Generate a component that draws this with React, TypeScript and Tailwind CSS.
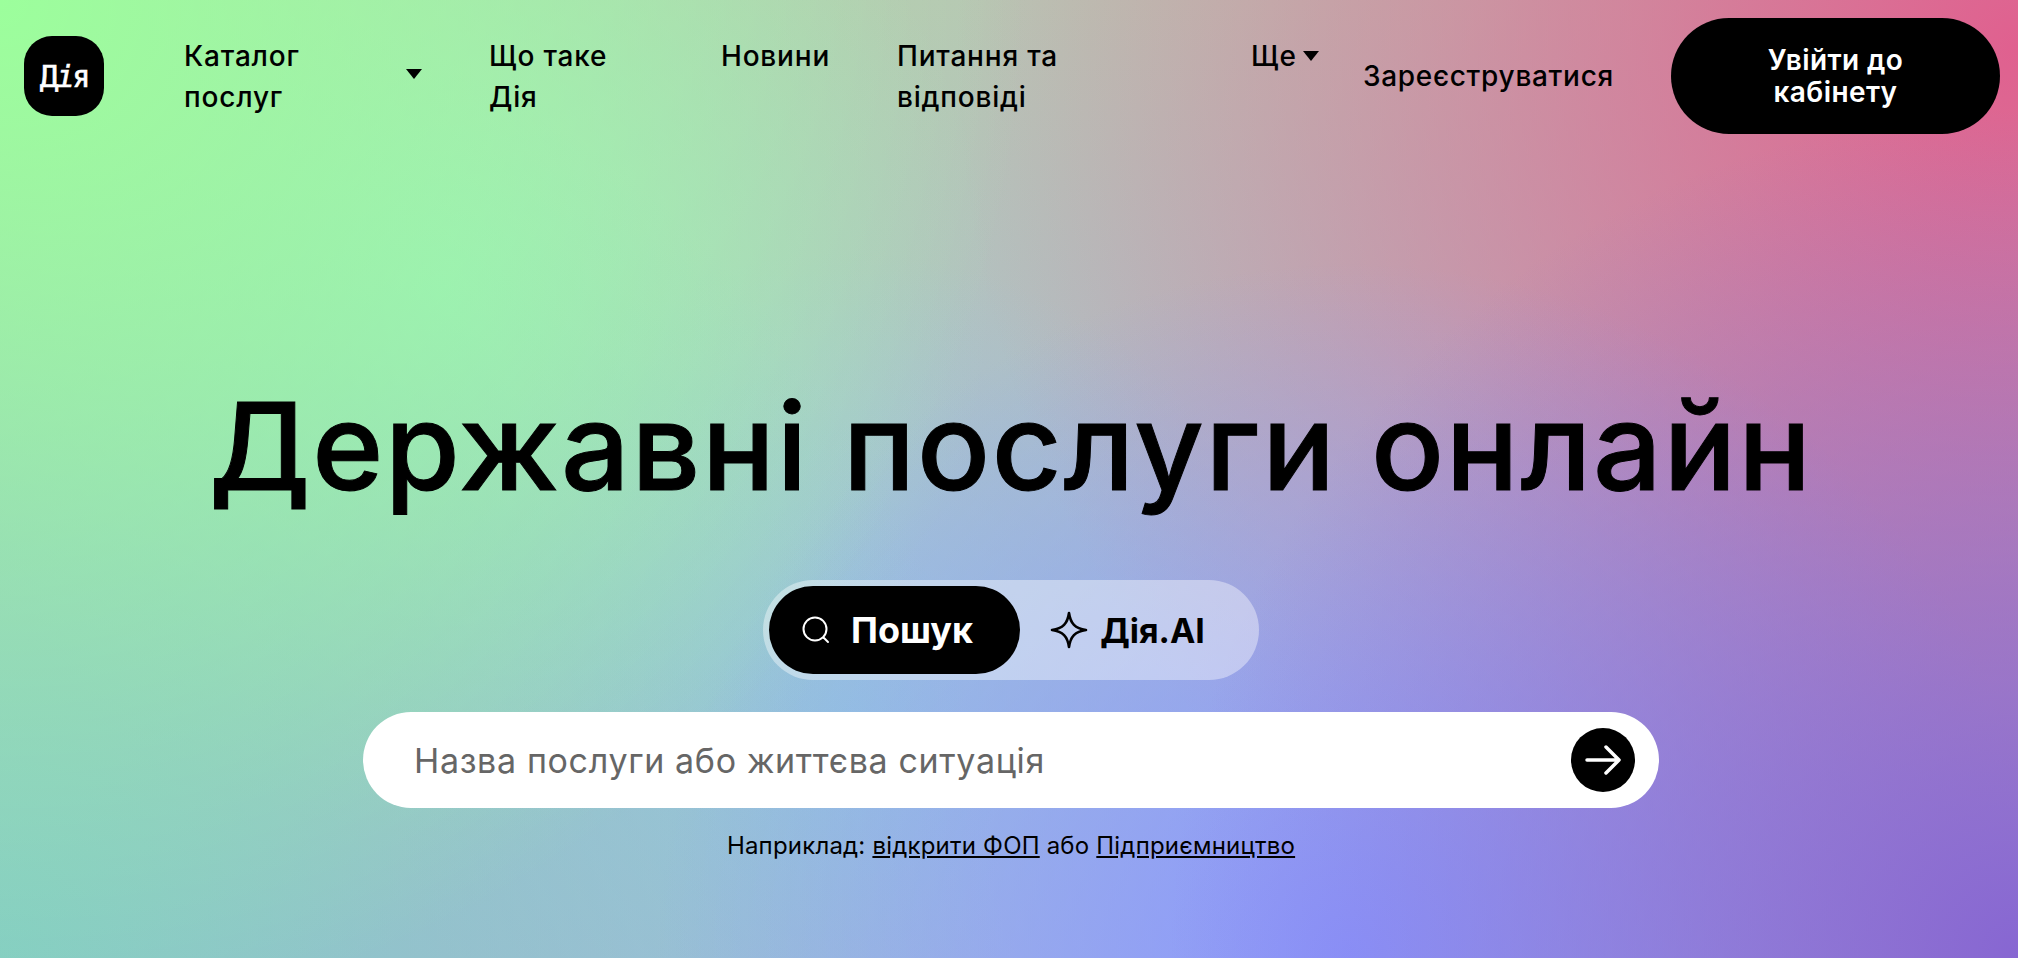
import React from "react";

function Caret({ className }: { className: string }) {
  return (
    <svg viewBox="0 0 16 10" className={className} aria-hidden="true">
      <path d="M0 0h16L8 10z" fill="currentColor" />
    </svg>
  );
}

export default function App() {
  return (
    <div className="h-screen overflow-hidden font-['Inter',sans-serif] text-black bg-[radial-gradient(circle_at_0%_0%,#9cff9c_0%,rgba(156,255,156,0)_46%),radial-gradient(circle_at_100%_100%,#8766d2_0%,rgba(135,102,210,0)_38%),radial-gradient(circle_at_67%_100%,#8a98ff_0%,rgba(138,152,255,0)_42%),radial-gradient(circle_at_100%_5%,#e0608f_0%,rgba(224,96,143,0)_48%),radial-gradient(circle_at_0%_100%,#84ccc4_0%,rgba(132,204,196,0)_45%),radial-gradient(circle_at_22%_30%,#a4ecc0_0%,rgba(164,236,192,0)_32%),radial-gradient(circle_at_42%_75%,#98c4e0_0%,rgba(152,196,224,0)_34%),linear-gradient(#b8c6b4,#a8b4d8)]">
      <header className="flex items-start pt-[18px] pl-6 pr-[18px] h-[134px]">
        <div className="mt-[18px] w-20 h-20 shrink-0 rounded-[28px] bg-black text-white flex items-center justify-center font-['DejaVu_Sans_Mono',monospace] text-[31px] tracking-[-2.5px] [-webkit-text-stroke:0.6px_white]">
          <span>Д<span className="italic">і</span>я</span>
        </div>
        <nav className="flex items-start text-[28px] leading-[41px] font-medium tracking-[0.8px]">
          <div className="ml-20 w-[305px] flex items-start pt-[18px]">
            <span className="w-[222px] pr-10">Каталог послуг</span>
            <Caret className="mt-[33px] w-4 h-[10px]" />
          </div>
          <div className="w-[232px] pt-[18px]"><span className="block w-[150px]">Що таке Дія</span></div>
          <div className="w-[176px] pt-[18px]">Новини</div>
          <div className="w-[354px] pt-[18px]"><span className="block w-[250px]">Питання та відповіді</span></div>
          <div className="w-[112px] pt-[18px] flex items-start gap-[6px]">
            <span>Ще</span>
            <Caret className="mt-[15px] w-4 h-[10px]" />
          </div>
        </nav>
        <div className="self-stretch flex items-center text-[28px] font-medium tracking-[0.7px] whitespace-nowrap">Зареєструватися</div>
        <div className="ml-auto w-[329px] h-[116px] rounded-full bg-black text-white flex items-center justify-center text-center text-[28px] leading-[32px] font-semibold tracking-[0.4px]">
          <span className="w-[190px]">Увійти до кабінету</span>
        </div>
      </header>
      <main className="flex flex-col items-center pl-1 pt-[237px]">
        <h1 className="text-[121px] leading-[150px] font-medium tracking-[1.8px] whitespace-nowrap [-webkit-text-stroke:1px_black]">Державні послуги онлайн</h1>
        <div className="mt-[59px] flex items-center w-[496px] h-[100px] p-[6px] rounded-full bg-white/40">
          <div className="w-[251px] h-[88px] rounded-full bg-black text-white flex items-center justify-center gap-[21px] pr-[14px] text-[36px] font-bold">
            <svg viewBox="0 0 28 28" className="w-7 h-7" fill="none" stroke="currentColor" strokeWidth="2" strokeLinecap="round" aria-hidden="true">
              <circle cx="13" cy="13" r="11.5" />
              <path d="M21.5 21.5 26 26" />
            </svg>
            Пошук
          </div>
          <div className="flex-1 flex items-center justify-center gap-3 pr-[18px] text-[34px] font-bold">
            <svg viewBox="0 0 38 38" className="w-[38px] h-[38px]" fill="none" stroke="currentColor" strokeWidth="2.6" strokeLinejoin="round" aria-hidden="true">
              <path d="M19 2c1.5 10.5 6 15.5 17 17-11 1.5-15.500 6.500-17 17-1.500-10.500-6-15.500-17-17 11-1.500 15.500-6.500 17-17z" />
            </svg>
            Дія.AI
          </div>
        </div>
        <div className="mt-8 w-[1296px] h-24 rounded-full bg-white flex items-center justify-between pl-[51px] pr-6">
          <span className="text-[34px] tracking-[0.65px] text-[#666666]">Назва послуги або життєва ситуація</span>
          <div className="w-16 h-16 rounded-full bg-black text-white flex items-center justify-center">
            <svg viewBox="0 0 36 30" className="w-9 h-[30px]" fill="none" stroke="currentColor" strokeWidth="3.500" strokeLinecap="round" strokeLinejoin="round" aria-hidden="true">
              <path d="M2 15h31M21 2l13 13-13 13" />
            </svg>
          </div>
        </div>
        <p className="mt-[22px] text-[24px] leading-[32px] tracking-[0.2px]">
          Наприклад: <a className="underline" href="#">відкрити ФОП</a> або <a className="underline" href="#">Підприємництво</a>
        </p>
      </main>
    </div>
  );
}
